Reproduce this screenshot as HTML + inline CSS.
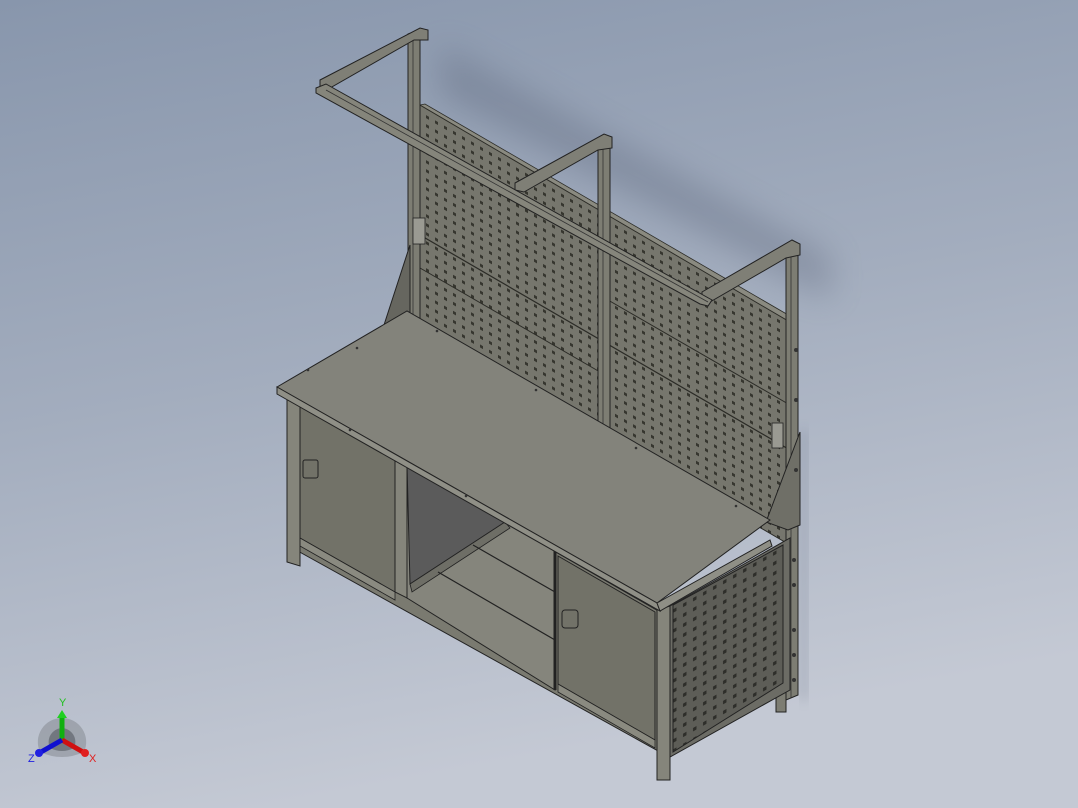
<!DOCTYPE html>
<html><head><meta charset="utf-8"><style>
html,body{margin:0;padding:0;width:1078px;height:808px;overflow:hidden}
svg{display:block}
</style></head><body>
<svg width="1078" height="808" viewBox="0 0 1078 808" xmlns="http://www.w3.org/2000/svg">
<defs>
<linearGradient id="bg" x1="0" y1="0" x2="0.25" y2="1">
<stop offset="0" stop-color="#8896ac"/><stop offset="0.5" stop-color="#a3adbe"/><stop offset="1" stop-color="#c4c9d4"/>
</linearGradient>
<filter id="blur" x="-20%" y="-50%" width="140%" height="200%"><feGaussianBlur stdDeviation="16"/></filter>
<filter id="blur2"><feGaussianBlur stdDeviation="6"/></filter>
<pattern id="peg" width="9" height="9" patternUnits="userSpaceOnUse" patternTransform="matrix(1,0.58,0,1,0,0)">
<rect width="9" height="9" fill="#76766d"/><rect x="3" y="3" width="3" height="3" fill="#36362f"/>
</pattern>
<pattern id="peg2" width="10" height="10" patternUnits="userSpaceOnUse" patternTransform="matrix(1,-0.57,0,1,0,0)">
<rect width="10" height="10" fill="#5d5d57"/><rect x="3" y="3" width="3.5" height="3.5" fill="#2e2e2a"/>
</pattern>
</defs>
<rect width="1078" height="808" fill="url(#bg)"/>
<!-- shadow -->
<path d="M440,45 L830,255 L830,300 L440,95 Z" fill="#5a6478" opacity="0.35" filter="url(#blur)"/>
<path d="M800,430 L808,430 L808,700 L800,700 Z" fill="#5a6478" opacity="0.25" filter="url(#blur2)"/>

<!-- pegboard back -->
<polygon points="420,105 790,322 790,545 420,330" fill="url(#peg)" stroke="#2b2b26" stroke-width="1"/>
<polygon points="420,105 425,104 790,316 790,322" fill="#8a8a80" stroke="#2b2b26" stroke-width="0.8"/>
<line x1="420" y1="235" x2="790" y2="450" stroke="#2b2b26" stroke-width="1.2"/>
<line x1="420" y1="268" x2="600" y2="372" stroke="#2b2b26" stroke-width="1"/>
<line x1="608" y1="300" x2="790" y2="405" stroke="#2b2b26" stroke-width="1"/>
<!-- uprights -->
<polygon points="408,34 420,30 420,330 408,330" fill="#7d7d73" stroke="#222" stroke-width="1"/>
<line x1="413" y1="34" x2="413" y2="330" stroke="#333" stroke-width="0.8"/>
<polygon points="598,143 610,138 610,430 598,430" fill="#7d7d73" stroke="#222" stroke-width="1"/>
<line x1="603" y1="142" x2="603" y2="430" stroke="#333" stroke-width="0.8"/>
<polygon points="786,250 798,244 798,695 786,700" fill="#7d7d73" stroke="#222" stroke-width="1"/>
<line x1="791" y1="248" x2="791" y2="698" stroke="#333" stroke-width="0.8"/>
<!-- top arms -->
<polygon points="320,80 420,28 428,30 428,40 414,40 330,88 320,88" fill="#7f7f76" stroke="#222" stroke-width="1"/>
<polygon points="515,183 604,134 612,137 612,148 598,150 524,192 515,190" fill="#7f7f76" stroke="#222" stroke-width="1"/>
<polygon points="702,292 792,240 800,244 800,255 786,258 710,302 702,300" fill="#7f7f76" stroke="#222" stroke-width="1"/>
<!-- long rail -->
<polygon points="316,88 326,84 712,300 708,306 700,304 316,93" fill="#85857b" stroke="#222" stroke-width="1"/>
<line x1="326" y1="90" x2="708" y2="302" stroke="#333" stroke-width="0.8"/>
<!-- switches -->
<rect x="413" y="218" width="12" height="26" fill="#9a9a92" stroke="#222" stroke-width="0.8"/>
<rect x="772" y="423" width="11" height="25" fill="#9a9a92" stroke="#222" stroke-width="0.8"/>
<!-- brackets -->
<polygon points="383,328 410,245 410,320" fill="#66665f" stroke="#222" stroke-width="1"/>
<polygon points="766,522 800,432 800,525 788,530" fill="#6f6f67" stroke="#222" stroke-width="1"/>

<!-- cabinet front face -->
<polygon points="287,397 660,612 660,752 287,545" fill="#7a7a70" stroke="#222" stroke-width="1"/>
<polygon points="300,403 395,458 395,592 300,538" fill="#727268" stroke="#222" stroke-width="1"/>
<rect x="303" y="460" width="15" height="18" rx="2" fill="none" stroke="#222" stroke-width="1"/>
<polygon points="407,465 555,551 555,690 407,598" fill="#85857c" stroke="#222" stroke-width="1"/>
<polygon points="407,465 505,522 410,584" fill="#5b5b5b" stroke="#222" stroke-width="1"/>
<polygon points="410,584 505,522 510,528 412,592" fill="#6e6e66" stroke="#222" stroke-width="0.8"/>
<line x1="473" y1="545" x2="555" y2="592" stroke="#222" stroke-width="1.2"/>
<line x1="438" y1="572" x2="555" y2="640" stroke="#222" stroke-width="1.2"/>
<line x1="555" y1="548" x2="555" y2="690" stroke="#222" stroke-width="3"/>
<polygon points="395,458 407,465 407,598 395,592" fill="#85857b" stroke="#222" stroke-width="1"/>
<polygon points="558,556 655,612 655,740 558,684" fill="#727268" stroke="#222" stroke-width="1"/>
<rect x="562" y="610" width="16" height="18" rx="3" fill="none" stroke="#222" stroke-width="1"/>
<polygon points="300,538 395,592 395,600 300,546" fill="#8a8a80" stroke="#222" stroke-width="0.8"/>
<polygon points="558,684 655,740 655,748 558,692" fill="#8a8a80" stroke="#222" stroke-width="0.8"/>
<!-- legs -->
<polygon points="287,397 300,402 300,566 287,562" fill="#85857b" stroke="#222" stroke-width="1"/>
<polygon points="657,610 670,606 670,780 657,780" fill="#85857b" stroke="#222" stroke-width="1"/>
<polygon points="776,550 786,545 786,712 776,712" fill="#7d7d73" stroke="#222" stroke-width="1"/>
<!-- right side panel -->
<polygon points="670,606 790,538 790,690 670,757" fill="#6c6c65" stroke="#222" stroke-width="1"/>
<polygon points="673,605 783,545 783,683 673,752" fill="url(#peg2)" stroke="#222" stroke-width="1"/>
<g fill="#333"><circle cx="794" cy="560" r="2"/><circle cx="794" cy="585" r="2"/><circle cx="794" cy="630" r="2"/><circle cx="794" cy="655" r="2"/><circle cx="794" cy="680" r="2"/><circle cx="796" cy="350" r="2"/><circle cx="796" cy="400" r="2"/><circle cx="796" cy="470" r="2"/></g>

<!-- tabletop -->
<polygon points="277,387 407,311 770,520 657,603" fill="#83837b" stroke="#222" stroke-width="1"/>
<polygon points="277,387 657,603 660,611 277,394" fill="#8f8f86" stroke="#222" stroke-width="1"/>
<polygon points="657,603 770,540 772,546 660,611" fill="#8f8f86" stroke="#222" stroke-width="1"/>
<g fill="#333"><circle cx="357" cy="348" r="1.3"/><circle cx="437" cy="331" r="1.3"/><circle cx="536" cy="390" r="1.3"/><circle cx="636" cy="448" r="1.3"/><circle cx="736" cy="506" r="1.3"/><circle cx="466" cy="496" r="1.3"/><circle cx="350" cy="430" r="1.3"/><circle cx="308" cy="370" r="1.3"/></g>

<!-- axis triad -->
<g transform="translate(62,740)">
<path d="M-22,12 A24,24 0 0 1 0,-22 A24,24 0 0 1 22,12 Q0,22 -22,12 Z" fill="#8a8f98" opacity="0.6"/>
<path d="M-12,8 A14,14 0 0 1 0,-12 A14,14 0 0 1 12,8 Q0,14 -12,8 Z" fill="#555a60" opacity="0.6"/>
<line x1="0" y1="0" x2="0" y2="-24" stroke="#10b010" stroke-width="5"/>
<polygon points="-5,-22 5,-22 0,-30" fill="#20d020"/>
<line x1="0" y1="0" x2="21" y2="12" stroke="#d01010" stroke-width="5"/>
<circle cx="23" cy="13" r="4" fill="#e02020"/>
<line x1="0" y1="0" x2="-21" y2="12" stroke="#1010d0" stroke-width="5"/>
<circle cx="-23" cy="13" r="4" fill="#2020e0"/>
<text x="-3" y="-34" font-family="Liberation Sans, sans-serif" font-size="11" fill="#20c020">Y</text>
<text x="27" y="22" font-family="Liberation Sans, sans-serif" font-size="11" fill="#e02020">X</text>
<text x="-34" y="22" font-family="Liberation Sans, sans-serif" font-size="11" fill="#2020e0">Z</text>
</g>
</svg>
</body></html>
